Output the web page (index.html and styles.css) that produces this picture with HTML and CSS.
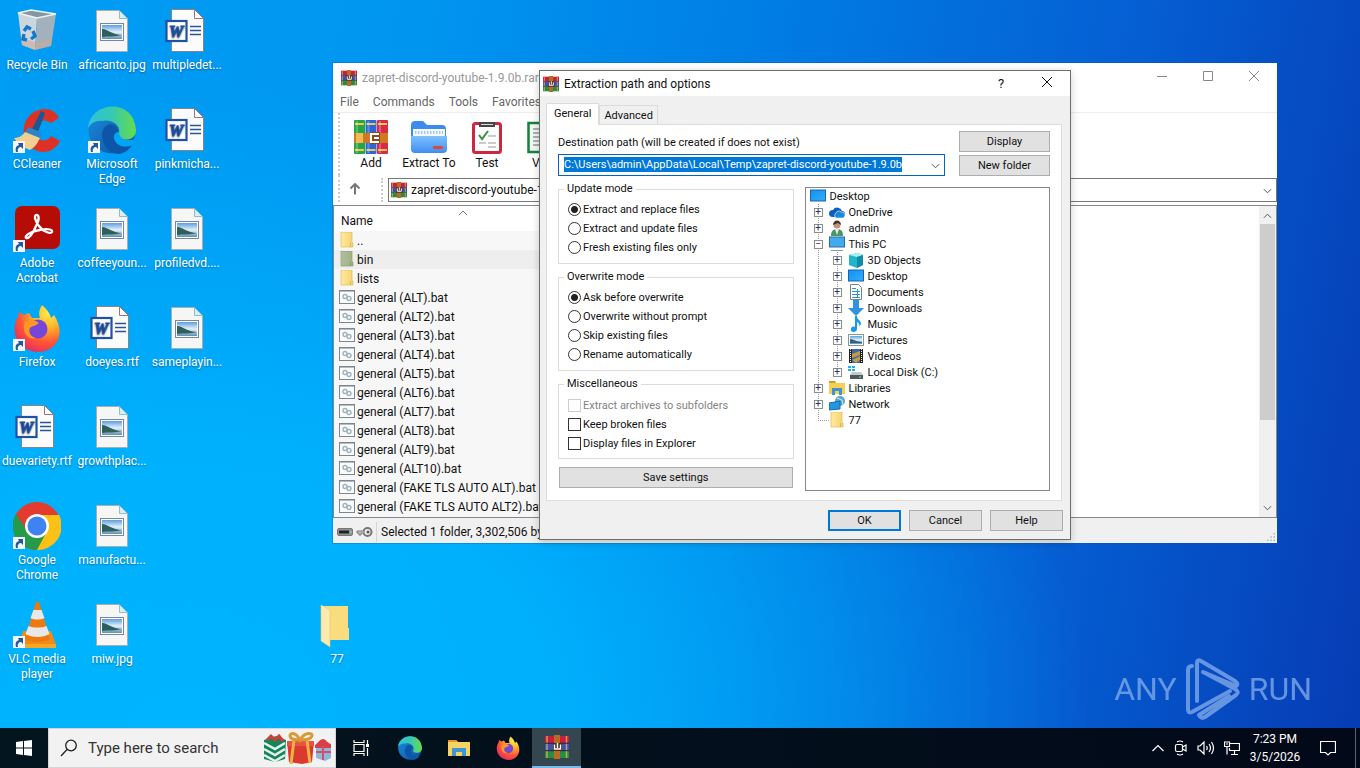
FILE: index.html
```
<!DOCTYPE html>
<html lang="en">

<head>
    <meta charset="UTF-8" />
    <meta name="viewport" content="width=device-width, initial-scale=1.0" />
    <title>Desktop</title>
    <link rel="stylesheet" href="styles.css">
</head>

<body>
    <!-- shared icons -->
    <svg class="sprite" aria-hidden="true">
        <defs>
            <linearGradient id="gFolder" x1="0" x2="1"><stop offset="0" stop-color="#ffe9a0" /><stop offset="1" stop-color="#f8d370" /></linearGradient>
            <linearGradient id="gEdgeTop" x1="0" x2="1"><stop offset="0" stop-color="#2fc2df" /><stop offset=".5" stop-color="#36c9b0" /><stop offset="1" stop-color="#66dd4a" /></linearGradient>
            <linearGradient id="gEdgeLow" x1="0" x2="1" y1="0" y2="1"><stop offset="0" stop-color="#1a8fdf" /><stop offset="1" stop-color="#0c4ea0" /></linearGradient>
            <radialGradient id="gFox" cx=".75" cy=".15" r="1"><stop offset="0" stop-color="#fff04a" /><stop offset=".35" stop-color="#ffb02a" /><stop offset=".65" stop-color="#ff5634" /><stop offset="1" stop-color="#e02070" /></radialGradient>
            <linearGradient id="gSky" x2="0" y2="1"><stop offset="0" stop-color="#5c9ee0" /><stop offset=".5" stop-color="#e4f1fa" /><stop offset="1" stop-color="#5d8fb5" /></linearGradient>
            <linearGradient id="gBlue" x2="1" y2="1"><stop offset="0" stop-color="#1690ee" /><stop offset="1" stop-color="#30aeff" /></linearGradient>
            <linearGradient id="gBox" x2="0" y2="1"><stop offset="0" stop-color="#7ec0ff" /><stop offset="1" stop-color="#3f8ef0" /></linearGradient>
        </defs>
        <symbol id="i-shortcut" viewBox="0 0 12 12">
            <rect width="12" height="12" fill="#f4f7fa" />
            <path d="M3 11c-1-4 0-6 3-7L5 2h5v6L8 6c-2 0-4 2-3 5z" fill="#22589c" />
        </symbol>
        <symbol id="i-bin" viewBox="0 0 48 48">
            <path d="M5 6l19 5-2 32-13-5z" fill="#ccd6dd" />
            <path d="M24 11l19-4-5 32-16 4z" fill="#a3b1bc" />
            <path d="M8 31l14 4v8L9 38zM22 36l17-4-1 7-16 4z" fill="#caa997" opacity=".6" />
            <path d="M5 6l13-3 25 4-19 4z" fill="#8597a3" stroke="#eef3f6" stroke-width="1.3" />
            <g fill="none" stroke="#1677c9" stroke-width="3.4"><path d="M11 24l3-4 4 2M20 24l2 5-4 3M14 33l-4-1 1-5" /></g>
        </symbol>
        <symbol id="i-image" viewBox="0 0 48 48">
            <path d="M8.500 3.500h23l8 8v33h-31z" fill="#f6f6f5" stroke="#a5aeb2" />
            <path d="M31.500 3.500v8h8z" fill="#d9edf7" stroke="#8fbcd0" />
            <rect x="12.500" y="16.500" width="23" height="17" fill="#fff" stroke="#7485a5" />
            <rect x="14" y="18" width="20" height="14" fill="url(#gSky)" />
            <path d="M14 22c6 0 10 6 20 6-6 2-14 1-20 2z" fill="#2e5f58" />
        </symbol>
        <symbol id="i-word" viewBox="0 0 48 48">
            <path d="M8.500 2.500h23l9 9v33h-32z" fill="#fbfbfb" stroke="#858585" />
            <path d="M31.500 2.500v9h9z" fill="#fff" stroke="#9a7480" />
            <path d="M27 19.500h11M27 23.500h11M27 27.500h11" stroke="#2a5699" stroke-width="1.300" />
            <rect x="3.500" y="14" width="20" height="20" fill="#fff" stroke="#1f52a3" stroke-width="2.200" />
            <text x="13" y="30" text-anchor="middle" class="wordmark">W</text>
        </symbol>
        <symbol id="i-ccleaner" viewBox="0 0 48 48">
            <path d="M46 12C40-2 18 1 12 17c-6 17 8 33 24 28 6-2 9-6 11-10l-9-5c-4 7-15 5-16-4-1-10 9-15 16-9z" fill="#dc3226" />
            <path d="M28 5l4 2-7 19-6-3z" fill="#1b5791" />
            <path d="M15 21l13 5-1 7-15-6z" fill="#2d83c5" />
            <path d="M12 26l15 6c-3 6-5 9-10 12-6-2-13-7-16-12 5 0 9-3 11-6z" fill="#f1cf91" />
        </symbol>
        <symbol id="i-edge" viewBox="0 0 48 48">
            <circle cx="24" cy="24" r="23.500" fill="url(#gEdgeLow)" />
            <path d="M0 22C3-6 46-8 48 24c0 8-7 11-14 9-3-1-5-3-3-6 2-8-8-14-16-12C8 14 3 17 0 22z" fill="url(#gEdgeTop)" />
            <path d="M16 22c-6 12 3 25 15 26 6-1 11-5 13-9-8 4-17 0-18-7-1-3 2-6 4-7-2-8-10-9-14-3z" fill="#0d55a6" />
        </symbol>
        <symbol id="i-edge-cut" viewBox="0 0 48 48">
            <path d="M31 26c0 5 4 8 9 8h7l-3 5c-8 4-17 0-18-7-1-3 2-6 5-6z" fill="#02a4f8" />
        </symbol>
        <symbol id="i-acrobat" viewBox="0 0 48 48">
            <rect x="2" y="1" width="45" height="43" rx="7" fill="#b50c05" />
            <path d="M23 10c3-1 4 4 0 11-3 7-7 13-10 12-2-2 5-7 14-8 9-2 13 0 12 2s-9 0-13-6c-4-5-5-10-3-11z" fill="none" stroke="#fff" stroke-width="2.300" />
        </symbol>
        <symbol id="i-firefox" viewBox="0 0 48 48">
            <path d="M29 1c5 4 8 9 9 13l3-3c6 9 8 20 2 28-7 11-25 12-35 2C0 33 0 21 5 13l1-5 5 3 5-2 3 5h8c-2-5 0-10 2-13z" fill="url(#gFox)" />
            <circle cx="25" cy="25" r="9.500" fill="#7646d8" />
            <path d="M12 18c5-3 11-2 14 1-3 3-7 3-9 5-2 5 1 9 6 10-9 3-15-8-11-16z" fill="#ff9628" />
        </symbol>
        <symbol id="i-chrome" viewBox="0 0 48 48">
            <circle cx="24" cy="24" r="24" fill="#e33b2e" />
            <path d="M24 13h22A24 24 0 0 1 23 48l10-18z" fill="#fbc116" />
            <path d="M3 12A24 24 0 0 0 24 48l9-17-18-1z" fill="#269a49" />
            <circle cx="24" cy="24" r="12" fill="#fff" />
            <circle cx="24" cy="24" r="9.500" fill="#3f82f1" />
        </symbol>
        <symbol id="i-vlc" viewBox="0 0 48 48">
            <path d="M10 30h28l5 14H6z" fill="#f18a18" />
            <path d="M6 43h37v4H6z" fill="#f7a823" />
            <path d="M23 1h3l11 37c-6 4-19 4-25 0z" fill="#ef790e" />
            <path d="M20.500 9h8l3 8c-4 2-10 2-14 0zM15.500 25c5 2 13 2 18 0l3 8c-7 4-17 4-24 0z" fill="#e8e8e8" />
        </symbol>
        <symbol id="i-bigfolder" viewBox="0 0 48 48">
            <path d="M10 5h25v22h1v12H9z" fill="#f9dc7d" />
            <path d="M8 4l9 5v37l-9-6z" fill="#fdeab0" stroke="#e8ca70" stroke-width=".6" />
        </symbol>
        <symbol id="i-folder" viewBox="0 0 16 16">
            <path d="M2 0h11v11h1v4H2z" fill="url(#gFolder)" stroke="#dfba55" stroke-width=".7" />
            <path d="M11.500 11v4" stroke="#e3b84b" />
        </symbol>
        <symbol id="i-bat" viewBox="0 0 16 14">
            <rect x=".5" y=".5" width="15" height="13" fill="#fbfbfb" stroke="#7c868d" />
            <path d="M1 1.500h14" stroke="#b5bdc2" />
            <g fill="none" stroke="#9db4c0" stroke-width="1.400"><circle cx="6" cy="6.500" r="2" /><circle cx="10" cy="8.500" r="2" /></g>
        </symbol>
        <symbol id="i-rar" viewBox="0 0 24 24">
            <path d="M0 1h24v7H0z" fill="#c4223c" /><path d="M0 8.500h24v7H0z" fill="#3f4fb5" /><path d="M0 16h24v7H0z" fill="#288d3e" />
            <path d="M2 1v22M21.500 1v22" stroke="#e8b84c" stroke-width="1.500" opacity=".75" />
            <path d="M0 8.200h24M0 15.700h24" stroke="#2b2140" />
            <path d="M9 0h6v24H9z" fill="#b96a24" />
            <path d="M8 8h9v8H8z" fill="#4b2c18" />
            <path d="M9.500 9.500V14h6V9.500M12.500 8v5" fill="none" stroke="#fff" stroke-width="1.400" />
        </symbol>
        <symbol id="i-addbooks" viewBox="0 0 34 34">
            <rect y="0" width="11" height="34" rx="1" fill="#25a544" /><rect x="11.500" width="11" height="34" rx="1" fill="#2868dc" /><rect x="23" width="11" height="34" rx="1" fill="#d92b49" />
            <path d="M1 4h9M1 30h9M12.500 4h9M12.500 30h9M24 4h9M24 30h9" stroke="#f2c64c" stroke-width="2" />
            <path d="M3 1v32M14.500 1v32M26 1v32" stroke="#fff" stroke-width="2" opacity=".25" />
            <path d="M0 13h34v10H0z" fill="#cf7a22" /><path d="M2 13h7v10H2z" fill="#efbb57" />
            <path d="M16 12h10v12H16z" fill="#8d4a1b" />
            <path d="M25 14h-8v8h8M20 18h5" fill="none" stroke="#fff" stroke-width="2" />
        </symbol>
        <symbol id="i-extract" viewBox="0 0 36 34">
            <path d="M0 5q0-4 4-4h8l4 4h15q4 0 4 4v10H0z" fill="#3c8cec" />
            <path d="M2 9h32v9H2z" fill="#f6fafe" /><path d="M4 12.500h28" stroke="#a7c8ec" stroke-dasharray="1.500 1.500" stroke-width="3" />
            <path d="M0 16h36v13q0 4-4 4H4q-4 0-4-4z" fill="url(#gBox)" />
            <rect x="22" y="26" width="10" height="3" rx="1" fill="#df4838" />
        </symbol>
        <symbol id="i-test" viewBox="0 0 30 34">
            <rect x="1.500" y="3.500" width="27" height="29" rx="2" fill="#fdfdfd" stroke="#cd2842" stroke-width="3" />
            <path d="M7 2h16v5H7z" fill="#454545" /><path d="M9 4.500h12" stroke="#ddd" />
            <path d="M7 15l3 4 6-8" fill="none" stroke="#39913d" stroke-width="2" />
            <path d="M16 16h8M7 23h7M16 23h8M16 27h8" stroke="#bbb" stroke-width="1.500" />
        </symbol>
        <symbol id="i-view" viewBox="0 0 36 34">
            <path d="M1.500 3h33v29h-33z" fill="#f4f8f4" stroke="#19803c" stroke-width="2.500" />
            <path d="M6 9h10M6 13h10M6 17h10M6 21h10M6 25h10" stroke="#8d9b92" stroke-width="1.300" />
        </symbol>
        <symbol id="i-monitor" viewBox="0 0 16 16">
            <rect x=".5" y="2" width="15" height="11" fill="url(#gBlue)" stroke="#1466ad" />
        </symbol>
    </svg>

    <main class="desktop">
        <ul class="shortcuts">
            <li><a href="#"><svg><use href="#i-bin" /></svg>Recycle Bin</a></li>
            <li><a href="#"><svg><use href="#i-ccleaner" /><use href="#i-shortcut" y="35" width="12" height="12" /></svg>CCleaner</a></li>
            <li><a href="#"><svg><use href="#i-acrobat" /><use href="#i-shortcut" y="35" width="12" height="12" /></svg>Adobe Acrobat</a></li>
            <li><a href="#"><svg><use href="#i-firefox" /><use href="#i-shortcut" y="35" width="12" height="12" /></svg>Firefox</a></li>
            <li><a href="#"><svg><use href="#i-word" /></svg>duevariety.rtf</a></li>
            <li><a href="#"><svg><use href="#i-chrome" /><use href="#i-shortcut" y="35" width="12" height="12" /></svg>Google Chrome</a></li>
            <li><a href="#"><svg><use href="#i-vlc" /><use href="#i-shortcut" y="35" width="12" height="12" /></svg>VLC media player</a></li>
            <li><a href="#"><svg><use href="#i-image" /></svg>africanto.jpg</a></li>
            <li><a href="#"><svg><use href="#i-edge" /><use href="#i-edge-cut" /><use href="#i-shortcut" y="35" width="12" height="12" /></svg>Microsoft Edge</a></li>
            <li><a href="#"><svg><use href="#i-image" /></svg>coffeeyoun...</a></li>
            <li><a href="#"><svg><use href="#i-word" /></svg>doeyes.rtf</a></li>
            <li><a href="#"><svg><use href="#i-image" /></svg>growthplac...</a></li>
            <li><a href="#"><svg><use href="#i-image" /></svg>manufactu...</a></li>
            <li><a href="#"><svg><use href="#i-image" /></svg>miw.jpg</a></li>
            <li><a href="#"><svg><use href="#i-word" /></svg>multipledet...</a></li>
            <li><a href="#"><svg><use href="#i-word" /></svg>pinkmicha...</a></li>
            <li><a href="#"><svg><use href="#i-image" /></svg>profiledvd....</a></li>
            <li><a href="#"><svg><use href="#i-image" /></svg>sameplayin...</a></li>
            <li class="loose"><a href="#"><svg><use href="#i-bigfolder" /></svg>77</a></li>
        </ul>

        <div class="watermark">
            <span>ANY</span>
            <svg viewBox="0 0 56 62" width="56" height="62" fill="none" stroke="currentColor" stroke-width="4" stroke-linejoin="round" stroke-linecap="round">
                <path d="M12 43V5q0-4 4-2l34 20q4 3 1 5L18 14" />
                <path d="M7 8q-4 0-4 4v39q0 5 4 3l38-21" />
                <path d="M20 15l30 16q5 3 1 6L20 59q-4 2-6-2l30-19" />
            </svg>
            <span>RUN</span>
        </div>

        <!-- archive window -->
        <section class="window archive">
            <header class="titlebar">
                <svg class="ico"><use href="#i-rar" /></svg>
                <h2>zapret-discord-youtube-1.9.0b.rar</h2>
                <div class="winbtns">
                    <button aria-label="Minimize"><svg viewBox="0 0 12 12"><path d="M1 6.500h10" /></svg></button>
                    <button aria-label="Maximize"><svg viewBox="0 0 12 12"><path d="M1.500 1.500h9v9h-9z" /></svg></button>
                    <button aria-label="Close"><svg viewBox="0 0 12 12"><path d="M1 1l10 10M11 1L1 11" /></svg></button>
                </div>
            </header>
            <nav class="menubar">
                <button>File</button>
                <button>Commands</button>
                <button>Tools</button>
                <button>Favorites</button>
            </nav>
            <div class="toolbar">
                <button><svg width="34" height="34"><use href="#i-addbooks" /></svg>Add</button>
                <button><svg width="36" height="34"><use href="#i-extract" /></svg>Extract To</button>
                <button><svg width="30" height="34"><use href="#i-test" /></svg>Test</button>
                <button><svg width="50" height="34"><use href="#i-view" /></svg>View</button>
            </div>
            <div class="addressbar">
                <button class="up" aria-label="Up"><svg viewBox="0 0 12 12"><path d="M6 11.500V1M1.500 5.500L6 1l4.500 4.500" /></svg></button>
                <div class="address">
                    <svg class="ico"><use href="#i-rar" /></svg>
                    <input type="text" value="zapret-discord-youtube-1.9.0b.rar" aria-label="Archive path">
                    <button aria-label="Show paths"><svg viewBox="0 0 10 6"><path d="M1 1l4 4 4-4" /></svg></button>
                </div>
            </div>
            <div class="listing">
                <table>
                    <thead>
                        <tr><th>Name<svg class="sort" viewBox="0 0 10 6"><path d="M1 5l4-4 4 4" /></svg></th></tr>
                    </thead>
                    <tbody>
                        <tr><td><svg class="ico"><use href="#i-folder" /></svg>..</td></tr>
                        <tr class="selected"><td><svg class="ico"><use href="#i-folder" /></svg>bin</td></tr>
                        <tr><td><svg class="ico"><use href="#i-folder" /></svg>lists</td></tr>
                        <tr><td><svg class="ico"><use href="#i-bat" /></svg>general (ALT).bat</td></tr>
                        <tr><td><svg class="ico"><use href="#i-bat" /></svg>general (ALT2).bat</td></tr>
                        <tr><td><svg class="ico"><use href="#i-bat" /></svg>general (ALT3).bat</td></tr>
                        <tr><td><svg class="ico"><use href="#i-bat" /></svg>general (ALT4).bat</td></tr>
                        <tr><td><svg class="ico"><use href="#i-bat" /></svg>general (ALT5).bat</td></tr>
                        <tr><td><svg class="ico"><use href="#i-bat" /></svg>general (ALT6).bat</td></tr>
                        <tr><td><svg class="ico"><use href="#i-bat" /></svg>general (ALT7).bat</td></tr>
                        <tr><td><svg class="ico"><use href="#i-bat" /></svg>general (ALT8).bat</td></tr>
                        <tr><td><svg class="ico"><use href="#i-bat" /></svg>general (ALT9).bat</td></tr>
                        <tr><td><svg class="ico"><use href="#i-bat" /></svg>general (ALT10).bat</td></tr>
                        <tr><td><svg class="ico"><use href="#i-bat" /></svg>general (FAKE TLS AUTO ALT).bat</td></tr>
                        <tr><td><svg class="ico"><use href="#i-bat" /></svg>general (FAKE TLS AUTO ALT2).bat</td></tr>
                    </tbody>
                </table>
                <div class="scrollbar">
                    <svg viewBox="0 0 10 6"><path d="M1 5l4-4 4 4" /></svg>
                    <div class="track"><div class="thumb"></div></div>
                    <svg viewBox="0 0 10 6"><path d="M1 1l4 4 4-4" /></svg>
                </div>
            </div>
            <footer class="statusbar">
                <svg width="16" height="8" viewBox="0 0 16 8"><rect x=".5" y=".5" width="15" height="7" rx="1.500" fill="#8d9596" stroke="#777" /><path d="M2 4h10" stroke="#222" stroke-width="3" /><path d="M13 4h1.500" stroke="#9f9" /></svg>
                <svg width="17" height="12" viewBox="0 0 17 12"><circle cx="11.500" cy="6" r="4" fill="none" stroke="#777" stroke-width="2" /><circle cx="12" cy="6" r="1.500" fill="#555" /><path d="M8 5H1v2h2v2h2V7h3" fill="#ccc" stroke="#777" /></svg>
                <span>Selected 1 folder, 3,302,506 bytes</span>
                <svg class="grip" viewBox="0 0 10 10"><path d="M8 0h2v2H8zM8 4h2v2H8zM8 8h2v2H8zM4 4h2v2H4zM4 8h2v2H4zM0 8h2v2H0z" fill="#b5b5b5" /></svg>
            </footer>
        </section>

        <!-- extraction dialog -->
        <section class="window dialog" role="dialog" aria-labelledby="dlgTitle">
            <header class="titlebar">
                <svg class="ico"><use href="#i-rar" /></svg>
                <h2 id="dlgTitle">Extraction path and options</h2>
                <div class="winbtns">
                    <button class="help">?</button>
                    <button aria-label="Close"><svg viewBox="0 0 12 12"><path d="M1 1l10 10M11 1L1 11" /></svg></button>
                </div>
            </header>
            <form id="extractForm">
                <div class="tabs">
                    <button type="button" class="tab active">General</button>
                    <button type="button" class="tab">Advanced</button>
                </div>
                <div class="page">
                    <div class="destination">
                        <div class="dest-path">
                            <label for="destPath">Destination path (will be created if does not exist)</label>
                            <div class="combo">
                                <input type="text" id="destPath" spellcheck="false" value="C:\Users\admin\AppData\Local\Temp\zapret-discord-youtube-1.9.0b">
                                <button type="button" aria-label="Show history"><svg viewBox="0 0 10 6"><path d="M1 1l4 4 4-4" /></svg></button>
                            </div>
                        </div>
                        <div class="dest-btns">
                            <button type="button" class="btn">Display</button>
                            <button type="button" class="btn">New folder</button>
                        </div>
                    </div>
                    <div class="options">
                        <div class="groups">
                            <fieldset>
                                <legend>Update mode</legend>
                                <label><input type="radio" name="update" checked>Extract and replace files</label>
                                <label><input type="radio" name="update">Extract and update files</label>
                                <label><input type="radio" name="update">Fresh existing files only</label>
                            </fieldset>
                            <fieldset>
                                <legend>Overwrite mode</legend>
                                <label><input type="radio" name="overwrite" checked>Ask before overwrite</label>
                                <label><input type="radio" name="overwrite">Overwrite without prompt</label>
                                <label><input type="radio" name="overwrite">Skip existing files</label>
                                <label><input type="radio" name="overwrite">Rename automatically</label>
                            </fieldset>
                            <fieldset class="checks">
                                <legend>Miscellaneous</legend>
                                <label class="off"><input type="checkbox" disabled>Extract archives to subfolders</label>
                                <label><input type="checkbox">Keep broken files</label>
                                <label><input type="checkbox">Display files in Explorer</label>
                            </fieldset>
                            <button type="button" class="btn save">Save settings</button>
                        </div>
                        <div class="tree">
                            <div class="node"><svg class="ico"><use href="#i-monitor" /></svg>Desktop</div>
                            <ul>
                                <li><div class="node"><button type="button" class="twig">+</button><svg class="ico" viewBox="0 0 16 16"><path d="M4 13a4 3.500 0 0 1 0-7 5 5 0 0 1 9 1 3 3 0 0 1 0 6z" fill="#0a5fbd" /><path d="M7 14a3 3 0 0 1 0-5 3 3 0 0 1 5-1c3 0 4 2 4 3s-1 3-2 3z" fill="#1a87dc" stroke="#fff" stroke-width=".6" /></svg>OneDrive</div></li>
                                <li><div class="node"><button type="button" class="twig">+</button><svg class="ico" viewBox="0 0 16 16"><path d="M2 16c0-5 2-7 6-7s6 2 6 7z" fill="#4f9468" /><path d="M6 9l2 6 2-6z" fill="#e5efe6" /><circle cx="8" cy="5" r="3.500" fill="#c69273" /><path d="M4 5c0-6 8-6 8 0l-3-2z" fill="#403029" /></svg>admin</div></li>
                                <li>
                                    <div class="node"><button type="button" class="twig">−</button><svg class="ico" viewBox="0 0 16 16"><rect x=".5" y="1" width="15" height="10" fill="#42aaf1" stroke="#2b6e9e" /><path d="M2 14.500h12" stroke="#879aa8" /></svg>This PC</div>
                                    <ul class="branch">
                                        <li><div class="node"><button type="button" class="twig">+</button><svg class="ico" viewBox="0 0 16 16"><path d="M1 3l8-2 6 2v10l-6 3-8-3z" fill="#24b4ca" /><path d="M1 3l8-2 6 2-6 2z" fill="#a8f0f4" /><path d="M9 5l6-2v10l-6 3z" fill="#118ba6" /></svg>3D Objects</div></li>
                                        <li><div class="node"><button type="button" class="twig">+</button><svg class="ico"><use href="#i-monitor" /></svg>Desktop</div></li>
                                        <li><div class="node"><button type="button" class="twig">+</button><svg class="ico" viewBox="0 0 16 16"><path d="M2.500.5h8l3 3v12h-11z" fill="#fff" stroke="#75868f" /><path d="M4 4.500h4M4 7.500h8M4 10.500h8M4 13.500h8M9.500 5v8" stroke="#2795d8" /></svg>Documents</div></li>
                                        <li><div class="node"><button type="button" class="twig">+</button><svg class="ico" viewBox="0 0 16 16"><path d="M5 0h6v8h5l-8 8-8-8h5z" fill="#3193de" /></svg>Downloads</div></li>
                                        <li><div class="node"><button type="button" class="twig">+</button><svg class="ico" viewBox="0 0 16 16"><path d="M7 0h2c0 4 4 4 4 8l-2 3c1-3 0-4-2-5v7c0 4-7 4-6 0 0-2 2-3 4-2z" fill="#159be9" /></svg>Music</div></li>
                                        <li><div class="node"><button type="button" class="twig">+</button><svg class="ico" viewBox="0 0 16 16"><rect x=".5" y="2.500" width="15" height="11" fill="#fff" stroke="#8795a1" /><path d="M2 4h12v8H2z" fill="url(#gSky)" /><path d="M2 7c4 0 6 3 12 3v1H2z" fill="#2b657b" /></svg>Pictures</div></li>
                                        <li><div class="node"><button type="button" class="twig">+</button><svg class="ico" viewBox="0 0 16 16"><path d="M1 1h14v14H1z" fill="#222" /><path d="M4 1h8v14H4z" fill="#3e66a8" /><path d="M4 6l8-3v4l-8 3zM4 12l8-4v4l-4 3z" fill="#c29c42" /><path d="M2.500 1v14M13.500 1v14" stroke="#eee" stroke-dasharray="1 1" /></svg>Videos</div></li>
                                        <li><div class="node"><button type="button" class="twig">+</button><svg class="ico" viewBox="0 0 16 16"><path d="M0 2h3v2H0zM4 2h3v2H4zM0 5h3v2H0zM4 5h3v2H4z" fill="#1bb2ea" /><path d="M4 8h9l2 3H2z" fill="#c3cacb" /><path d="M2 11h13v4H2z" fill="#4d595d" /><path d="M11 13h2" stroke="#6f7" /></svg>Local Disk (C:)</div></li>
                                    </ul>
                                </li>
                                <li><div class="node"><button type="button" class="twig">+</button><svg class="ico" viewBox="0 0 16 16"><path d="M0 1h6l1 2h9v11H0z" fill="#f8cf55" /><path d="M0 1h6l1 2H0z" fill="#d69a2b" /><path d="M3 15V8h10v7h-3v-4H6v4z" fill="#3d94cf" /></svg>Libraries</div></li>
                                <li><div class="node"><button type="button" class="twig">+</button><svg class="ico" viewBox="0 0 16 16"><circle cx="11" cy="5" r="5" fill="#5aa7cb" /><path d="M8 2l5 2 1 5" fill="none" stroke="#cdeaf4" /><path d="M0 7l11-2v8L0 14z" fill="#2196e2" stroke="#1c6ca5" /></svg>Network</div></li>
                                <li><div class="node"><span class="twig end"></span><svg class="ico"><use href="#i-folder" /></svg>77</div></li>
                            </ul>
                        </div>
                    </div>
                </div>
                <div class="dialog-btns">
                    <button type="submit" class="btn primary">OK</button>
                    <button type="button" class="btn">Cancel</button>
                    <button type="button" class="btn">Help</button>
                </div>
            </form>
        </section>
    </main>

    <footer class="taskbar">
        <button class="task start" aria-label="Start"><svg width="16" height="16" viewBox="0 0 16 16" fill="#fff"><path d="M0 2l7-1v6.500H0zM8 1l8-1v7.500H8zM0 8.500h7V15l-7-1zM8 8.500h8V16l-8-1z" /></svg></button>
        <div class="search">
            <svg width="18" height="18" viewBox="0 0 18 18" fill="none" stroke="#222" stroke-width="1.300"><circle cx="11" cy="6.500" r="5.300" /><path d="M7 10.500L1 17" /></svg>
            <input type="search" placeholder="Type here to search" aria-label="Search">
            <svg width="70" height="34" viewBox="0 0 70 34">
                <path d="M1 9l12-4 10 4-1 19-10 3-11-3z" fill="#16855f" />
                <path d="M1 12l11 6 10-6M1 18l11 6 10-6M1 24l11 6 10-6" fill="none" stroke="#e4f3ea" stroke-width="2.500" />
                <path d="M4 9l4-4 4 4 4-4 4 5" fill="none" stroke="#d23e32" stroke-width="3" />
                <path d="M24 10h27l-2 21-10 2-13-2z" fill="#d93a2d" />
                <path d="M24 10h27v5H24z" fill="#e65343" />
                <path d="M28 33l3-24M47 32L44 9" stroke="#eeb146" stroke-width="3" />
                <path d="M37 9C32 0 27 2 27 5s6 4 10 4c5 0 11-1 12-4S42 0 37 9z" fill="none" stroke="#d99a35" stroke-width="3" />
                <path d="M53 17h15v10l-6 3-9-3z" fill="#8cb8df" />
                <path d="M52 14c3-2 5-6 8-6s4 4 8 5v4H52z" fill="#d84048" />
                <path d="M60 15v14M53 21h15" stroke="#d84f65" stroke-width="2" />
            </svg>
        </div>
        <button class="task" aria-label="Task view"><svg width="18" height="18" viewBox="0 0 18 18" fill="none" stroke="#fff" stroke-width="1.200"><path d="M2 1v2.500h10V1M2 17v-2.500h10V17M2 5.500h10v7H2zM15.500 1v4M15.500 9v8" /><path d="M14 5h3v3h-3z" fill="#fff" stroke="none" /></svg></button>
        <button class="task" aria-label="Edge"><svg width="24" height="24"><use href="#i-edge" /></svg></button>
        <button class="task" aria-label="File Explorer"><svg width="22" height="20" viewBox="0 0 22 20"><path d="M0 2h8l2 2h12v14H0z" fill="#f7d366" /><path d="M0 2h8l2 2H0z" fill="#dd9b26" /><path d="M4 18v-8h14v8h-4v-4H8v4z" fill="#3e97d5" /></svg></button>
        <button class="task" aria-label="Firefox"><svg width="24" height="24"><use href="#i-firefox" /></svg></button>
        <button class="task running" aria-label="WinRAR"><svg width="24" height="24"><use href="#i-rar" /></svg></button>
        <div class="tray">
            <svg width="14" height="8" viewBox="0 0 14 8"><path d="M1.500 7L7 1.500 12.500 7" /></svg>
            <svg width="14" height="16" viewBox="0 0 14 16"><rect x="1.500" y="4.500" width="7" height="7" rx="1.500" /><path d="M8.500 7l3.500-2v6L8.500 9M3 2q3-2 6 0M3 14q3 2 6 0" /></svg>
            <svg width="18" height="14" viewBox="0 0 18 14"><path d="M1 5h2l4-4v12L3 9H1zM9.500 5q1.500 2 0 4M12 3q3 4 0 8M14.500 1q4 6 0 12" /></svg>
            <svg width="16" height="14" viewBox="0 0 16 14"><path d="M6 2.500h9.500v7h-10V7M10.500 9.500v4M7 13.500h7M3 6v7.500M.5 1h5v4.500h-5zM2 3h2" /></svg>
        </div>
        <div class="clock"><time>7:23 PM</time><time>3/5/2026</time></div>
        <button class="notify" aria-label="Notifications"><svg width="16" height="16" viewBox="0 0 16 16" fill="none" stroke="#fff" stroke-width="1.200"><path d="M.5 1.500h15v11h-5L8 15l-2.500-2.500h-5z" /></svg></button>
        <div class="peek"></div>
    </footer>

    <script>
        const destPath = document.querySelector('#destPath');
        destPath.focus();
        destPath.select();

        document.querySelector('#extractForm').addEventListener('submit', (e) => e.preventDefault());
    </script>
</body>

</html>
```
FILE: styles.css
```
* {
    box-sizing: border-box;
}

body {
    margin: 0;
    height: 100vh;
    display: flex;
    flex-direction: column;
    overflow: hidden;
    font-family: Roboto, "Noto Sans", sans-serif;
    font-size: 12px;
    color: #111;
}

button,
input {
    margin: 0;
    padding: 0;
    border: 0;
    background: none;
    font: inherit;
    color: inherit;
    outline: 0;
}

ul {
    list-style: none;
    margin: 0;
    padding: 0;
}

svg {
    flex: none;
}

.sprite {
    position: absolute;
    width: 0;
    height: 0;
}

.ico {
    width: 16px;
    height: 16px;
}

.wordmark {
    font: italic bold 16px "Liberation Serif", serif;
    fill: #1f52a3;
    stroke: #1f52a3;
    stroke-width: 1px;
}

/* desktop */
.desktop {
    position: relative;
    flex: 1;
    min-height: 0;
    background:
        radial-gradient(ellipse 900px 640px at 14% 100%, #00b4ff 0, rgba(0, 180, 255, 0.9) 40%, rgba(0, 180, 255, 0) 100%),
        linear-gradient(100deg, #009df5 0, #0096f0 28%, #007de4 52%, #0560d4 76%, #063cb4 100%);
}

.shortcuts {
    display: grid;
    grid-template-rows: repeat(7, 99px);
    grid-auto-columns: 75px;
    grid-auto-flow: column;
    justify-content: start;
}

.shortcuts .loose {
    grid-column: 5;
    grid-row: 7;
}

.shortcuts a {
    display: flex;
    flex-direction: column;
    align-items: center;
    gap: 3px;
    padding: 7px 1px 0 0;
    color: #fff;
    line-height: 15px;
    text-align: center;
    text-decoration: none;
    text-shadow: 0 1px 2px rgba(0, 0, 0, 0.4);
}

.shortcuts a svg {
    width: 48px;
    height: 48px;
}

.watermark {
    position: absolute;
    right: 48px;
    bottom: 8px;
    display: flex;
    align-items: center;
    gap: 8px;
    color: #7ea8ea;
    opacity: 0.8;
    font: 32px Roboto, sans-serif;
}

/* windows */
.window {
    position: absolute;
    background: #fff;
}

.titlebar {
    display: flex;
    align-items: center;
    gap: 5px;
}

.titlebar h2 {
    flex: 1;
    margin: 0;
    font-size: 12px;
    font-weight: normal;
}

.winbtns {
    display: flex;
}

.winbtns button {
    width: 46px;
    height: 24px;
}

.winbtns svg {
    width: 12px;
    height: 12px;
    fill: none;
    stroke: #111;
}

.archive {
    left: 333px;
    right: 83px;
    top: 63px;
    bottom: 185px;
    display: flex;
    flex-direction: column;
    box-shadow: 0 0 0 1px rgba(0, 90, 170, 0.3);
}

.archive .titlebar {
    height: 29px;
    padding-left: 8px;
    color: #999;
}

.archive .winbtns svg {
    stroke: #888;
}

.menubar {
    display: flex;
    gap: 14px;
    height: 21px;
    padding: 0 7px;
    border-bottom: 1px solid #ececec;
    color: #666;
}

.toolbar {
    display: flex;
    height: 62px;
    margin-left: 5px;
    padding: 7px 0 0 2px;
    border-left: 2px dotted #ccc;
}

.toolbar button {
    width: 58px;
    display: flex;
    flex-direction: column;
    align-items: center;
    gap: 1px;
    white-space: nowrap;
    line-height: 17px;
}

.addressbar {
    display: flex;
    height: 27px;
    margin-left: 5px;
    padding: 3px 0 0;
    border-left: 2px dotted #ccc;
}

.up {
    width: 43px;
    margin-right: 5px;
    padding-right: 12px;
    border-right: 2px dotted #ccc;
}

.up svg {
    width: 12px;
    height: 12px;
    fill: none;
    stroke: #777;
    stroke-width: 2;
}

.address {
    flex: 1;
    display: flex;
    align-items: center;
    gap: 4px;
    padding-left: 2px;
    border: 1px solid #767676;
}

.address input {
    flex: 1;
}

.address button,
.combo button {
    width: 17px;
}

.address button svg,
.combo button svg,
.scrollbar svg {
    width: 9px;
    height: 6px;
    fill: none;
    stroke: #444;
}

.listing {
    flex: 1;
    min-height: 0;
    display: flex;
    justify-content: space-between;
    margin-top: 3px;
    border: 1px solid #828790;
}

.listing table {
    width: 270px;
    border-collapse: collapse;
}

.listing th {
    height: 25px;
    padding: 0 0 0 7px;
    font-weight: normal;
    text-align: left;
}

.sort {
    width: 10px;
    height: 6px;
    margin-left: 85px;
    vertical-align: 9px;
    fill: none;
    stroke: #777;
}

.listing td {
    height: 19px;
    padding: 0 0 0 5px;
    background: #f7f7f7;
    line-height: 18px;
    white-space: nowrap;
}

.listing td .ico {
    margin-right: 2px;
    vertical-align: -3px;
}

.selected td {
    background: #eee;
}

.selected .ico {
    filter: hue-rotate(35deg) saturate(0.5) brightness(0.8);
}

.scrollbar {
    display: flex;
    flex-direction: column;
    align-items: center;
    gap: 5px;
    width: 17px;
    padding: 7px 1px 6px;
    background: #f0f0f0;
}

.track {
    flex: 1;
    width: 100%;
}

.thumb {
    height: 71%;
    background: #cdcdcd;
}

.statusbar {
    display: flex;
    align-items: center;
    gap: 3px;
    height: 25px;
    padding: 2px 2px 0 4px;
    background: #f0f0f0;
}

.statusbar span {
    flex: 1;
    padding: 3px 4px;
    border-left: 1px solid #d5d5d5;
}

.grip {
    width: 8px;
    height: 8px;
    align-self: flex-end;
    margin-bottom: 2px;
}

/* extraction dialog */
.dialog {
    left: 539px;
    right: 289px;
    top: 70px;
    border: 1px solid #6d6d6d;
    background: #f0f0f0;
    font-size: 11px;
    box-shadow: 0 2px 8px rgba(0, 0, 0, 0.2);
}

.dialog .titlebar {
    height: 25px;
    padding-left: 3px;
    background: #fff;
}

.help {
    font-size: 13px;
}

.dialog form {
    padding: 7px 8px 8px 6px;
}

.tabs {
    display: flex;
    align-items: flex-end;
}

.tab {
    height: 19px;
    padding: 0 4px;
    border: 1px solid #dcdcdc;
    border-bottom: 0;
}

.tab.active {
    height: 22px;
    margin-bottom: -1px;
    padding: 0 7px 2px;
    background: #fff;
    z-index: 1;
}

.page {
    padding: 6px 11px 9px 11px;
    border: 1px solid #dcdcdc;
    background: #fff;
}

.destination {
    display: flex;
    gap: 14px;
}

.dest-path {
    flex: 1;
    display: flex;
    flex-direction: column;
    justify-content: space-between;
    padding-top: 5px;
}

.combo {
    display: flex;
    height: 22px;
    border: 1px solid #0067c0;
}

.combo input {
    flex: 1;
    height: 15px;
    margin: 2px 0 0 5px;
    line-height: 15px;
}

.combo input::selection {
    background: #0078d7;
    color: #fff;
}

.dest-btns {
    width: 91px;
    display: flex;
    flex-direction: column;
    gap: 3px;
}

.btn {
    height: 21px;
    border: 1px solid #adadad;
    background: #e1e1e1;
}

.options {
    display: flex;
    gap: 11px;
    margin-top: 6px;
}

.groups {
    flex: 1 1 236px;
    min-width: 0;
    display: flex;
    flex-direction: column;
    gap: 6px;
    padding-bottom: 3px;
}

fieldset {
    margin: 0;
    padding: 4px 9px 6px;
    border: 1px solid #dcdcdc;
}

legend {
    margin-left: -4px;
    padding: 0 3px;
    line-height: 14px;
}

fieldset label {
    display: flex;
    align-items: center;
    gap: 2px;
    height: 19px;
}

.checks {
    padding: 5px 9px;
}

fieldset input {
    appearance: none;
    width: 13px;
    height: 13px;
    border: 1px solid #333;
    background: #fff;
}

fieldset input[type="radio"] {
    border-radius: 50%;
}

fieldset input[type="radio"]:checked {
    background: radial-gradient(circle, #222 0 3px, #fff 4px);
}

.off {
    color: #838383;
}

.off input {
    border-color: #ccc;
}

.save {
    margin: 2px 1px 0;
}

.tree {
    flex: 1 1 246px;
    min-width: 0;
    margin-top: 5px;
    padding: 0 4px;
    border: 1px solid #828790;
}

.node {
    display: flex;
    align-items: center;
    gap: 4px;
    height: 16px;
}

.tree ul {
    background: repeating-linear-gradient(#999 0 1px, transparent 1px 2px) 8px 0 / 1px calc(100% - 8px) no-repeat;
}

.tree .branch {
    margin-left: 19px;
}

.twig {
    width: 9px;
    height: 9px;
    margin: 0 2px 0 4px;
    border: 1px solid #8c8c8c;
    background: #fff;
    color: #24366e;
    font-size: 10px;
    line-height: 6px;
}

.twig.end {
    width: 11px;
    height: 1px;
    margin: 0 -4px 0 8px;
    border: 0;
    border-top: 1px dotted #999;
    background: none;
}

.dialog-btns {
    display: flex;
    justify-content: flex-end;
    gap: 8px;
    margin: 9px -1px 0 0;
}

.dialog-btns .btn {
    width: 73px;
}

.dialog-btns .primary {
    border: 2px solid #0078d7;
}

/* taskbar */
.taskbar {
    display: flex;
    height: 40px;
    background: linear-gradient(90deg, #03151f, #020918);
    color: #fff;
}

.task {
    width: 49px;
    display: flex;
    align-items: center;
    justify-content: center;
}

.start {
    width: 48px;
}

.running {
    background: #344750;
    border-bottom: 2px solid #76b9ed;
}

.search {
    width: 288px;
    display: flex;
    align-items: center;
    gap: 10px;
    padding: 0 2px 0 11px;
    border: 1px solid #d5d5d5;
    background: #f2f2f2;
}

.search input {
    flex: 1;
    min-width: 0;
    font-size: 15px;
    color: #333;
}

.search input::placeholder {
    color: #333;
}

.tray {
    display: flex;
    align-items: center;
    gap: 9px;
    margin-left: auto;
}

.tray svg {
    fill: none;
    stroke: #fff;
    stroke-width: 1.2;
}

.clock {
    width: 70px;
    display: flex;
    flex-direction: column;
    justify-content: center;
    align-items: center;
    line-height: 18px;
}

.notify {
    width: 35px;
    display: flex;
    align-items: center;
    justify-content: center;
}

.peek {
    width: 5px;
    margin-left: 10px;
    border-left: 1px solid #5d6672;
}
```
